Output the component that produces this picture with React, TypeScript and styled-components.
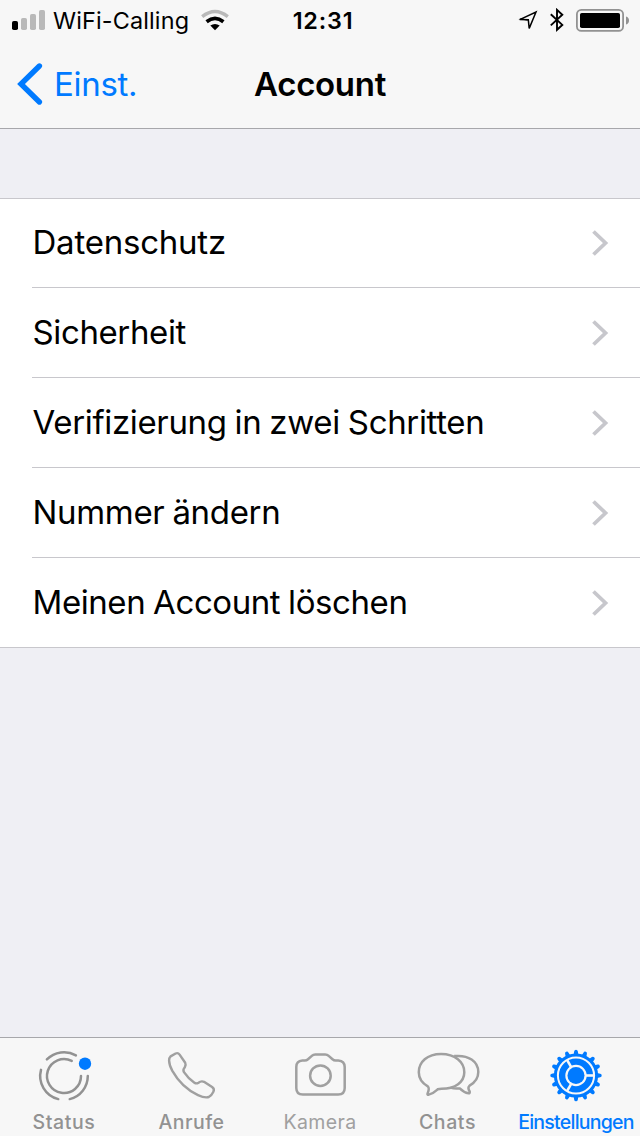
import React from "react";
import styled, { createGlobalStyle } from "styled-components";

const BLUE = "#007aff";
const GREY = "#929292";

const GlobalStyle = createGlobalStyle`
  * { box-sizing: border-box; }
  body { margin: 0; background: #efeff4; }
`;

const Screen = styled.div`
  width: 640px;
  height: 1136px;
  display: flex;
  flex-direction: column;
  background: #efeff4;
  color: #000;
  font-family: Inter, "Liberation Sans", sans-serif;
  overflow: hidden;
`;

const Header = styled.header`
  height: 129px;
  background: #f7f7f7;
  border-bottom: 1px solid #a7a7ab;
`;

const StatusBar = styled.div`
  height: 40px;
  display: grid;
  grid-template-columns: 1fr auto 1fr;
  align-items: center;
  padding: 0 11px 0 12px;
`;

const StatusGroup = styled.div<{ $end?: boolean }>`
  display: flex;
  align-items: center;
  justify-content: ${(p) => (p.$end ? "flex-end" : "flex-start")};
  height: 40px;
`;

const Label = styled.span<{ $size: number; $weight?: number; $track?: number; $color?: string }>`
  font-size: ${(p) => p.$size}px;
  font-weight: ${(p) => p.$weight ?? 400};
  letter-spacing: ${(p) => p.$track ?? 0}px;
  color: ${(p) => p.$color ?? "#000"};
  line-height: 1.2;
  white-space: nowrap;
`;

const Carrier = styled(Label)`
  padding-top: 2px;
  margin: 0 12px 0 8px;
`;

const Clock = styled(Label)`
  padding: 2px 0 0 5px;
`;

const NavBar = styled.nav`
  height: 88px;
  display: grid;
  grid-template-columns: 1fr auto 1fr;
  align-items: center;
  padding: 0 17px;
`;

const NavLabel = styled(Label)`
  padding-top: 2px;
`;

const Back = styled.div`
  display: flex;
  align-items: center;
  gap: 10px;
`;

const List = styled.ul`
  list-style: none;
  margin: 69px 0 0;
  padding: 0 0 0 32px;
  background: #fff;
  border-top: 1px solid #c8c7cc;
  border-bottom: 1px solid #c8c7cc;
`;

const Row = styled.li`
  height: 90px;
  display: flex;
  align-items: center;
  justify-content: space-between;
  padding: 1px 31px 0 0;
  border-top: 1px solid #c8c7cc;
  &:first-child { height: 88px; padding-top: 0; border-top: 0; }
`;

const RowLabel = styled(Label)`
  padding-left: 0.5px;
  word-spacing: -1px;
`;

const Spacer = styled.div`
  flex: 1;
`;

const TabBar = styled.footer`
  height: 99px;
  display: grid;
  grid-template-columns: repeat(5, 128px);
  background: #f7f7f7;
  border-top: 1px solid #a7a7ab;
`;

const Tab = styled.div<{ $pull?: number }>`
  display: flex;
  flex-direction: column;
  align-items: center;
  padding-top: 8px;
  padding-right: ${(p) => p.$pull ?? 0}px;
  gap: 5px;
`;

const rad = (deg: number) => (deg * Math.PI) / 180;
const arc = (cx: number, cy: number, r: number, from: number, to: number) => {
  const x = (d: number) => (cx + r * Math.cos(rad(d))).toFixed(2);
  const y = (d: number) => (cy + r * Math.sin(rad(d))).toFixed(2);
  return `M${x(from)} ${y(from)}A${r} ${r} 0 ${to - from > 180 ? 1 : 0} 1 ${x(to)} ${y(to)}`;
};

const SignalIcon = () => (
  <svg width="33" height="40" viewBox="0 0 33 40">
    <rect x="0" y="21" width="6" height="9" rx="1.8" fill="#000" />
    <rect x="9" y="18" width="6" height="12" rx="1.8" fill="#b9b9b9" />
    <rect x="18" y="14" width="6" height="16" rx="1.8" fill="#b9b9b9" />
    <rect x="27" y="10" width="6" height="20" rx="1.8" fill="#b9b9b9" />
  </svg>
);

const WifiIcon = () => (
  <svg width="28" height="40" viewBox="0 0 28 40" fill="none">
    <path d="M1.2 16.6Q14 6.4 26.8 16.6" stroke="#b9b9b9" strokeWidth="3.4" />
    <path d="M5.6 21.7Q14 15.2 22.4 21.7" stroke="#000" strokeWidth="3.7" />
    <path d="M9.3 25.6Q14 22.2 18.7 25.6L14 30.2Z" fill="#000" />
  </svg>
);

const LocationIcon = () => (
  <svg width="20" height="20" viewBox="0 0 20 20">
    <path d="M1.7 9.6L18 2.1L11.2 18.4L10.3 9.7Z" fill="none" stroke="#000" strokeWidth="1.5" />
    <path d="M0 9.1H8.5L10.8 10.2L9 10.5Z" fill="#000" />
  </svg>
);

const BluetoothIcon = () => (
  <svg width="14" height="24" viewBox="0 0 14 24">
    <path d="M.8 6.3L12.3 16.9L7 21.8V1.9L12.3 6.7L.8 17.4" fill="none" stroke="#000" strokeWidth="1.9" />
  </svg>
);

const BatteryIcon = () => (
  <svg width="53" height="24" viewBox="0 0 53 24">
    <rect x=".9" y="1.9" width="46.2" height="21" rx="4.4" fill="none" stroke="#929292" strokeWidth="1.8" />
    <rect x="4" y="5" width="40" height="15" rx="1.8" fill="#000" />
    <path d="M50 8.6Q53 9.5 53 12.6T50 16.6Z" fill="#929292" />
  </svg>
);

const StatusIcons = styled(StatusGroup)`
  & > svg:nth-child(1) { margin-right: 12px; }
  & > svg:nth-child(2) { margin-right: 12px; }
`;

const BackIcon = () => (
  <svg width="27" height="44" viewBox="0 0 27 44">
    <path d="M22.4 4L4 22L22.4 40" fill="none" stroke={BLUE} strokeWidth="5.4" strokeLinecap="round" strokeLinejoin="miter" />
  </svg>
);

const Chevron = () => (
  <svg width="18" height="28" viewBox="0 0 18 28">
    <path d="M2.5 2.5L14.5 14L2.5 25.5" fill="none" stroke="#c7c7cc" strokeWidth="3.8" />
  </svg>
);

const StatusTabIcon = () => (
  <svg width="60" height="60" viewBox="0 0 60 60">
    <g fill="none" stroke={GREY} strokeWidth="2.5" strokeLinecap="round">
      <path d={arc(30, 30, 17, 0, 297)} />
      <path d={arc(30, 30, 23.8, 224, 300)} />
      <path d={arc(30, 30, 23.8, 104, 195)} />
      <path d={arc(30, 30, 23.8, 0, 76)} />
    </g>
    <circle cx="51" cy="17.7" r="6.2" fill={BLUE} />
  </svg>
);

const CallsTabIcon = () => (
  <svg width="60" height="60" viewBox="0 0 60 60">
    <path
      d="M8.6 10.4L13.6 7.5Q16 6.4 17.6 8.6L23.2 16.8Q24.2 18.8 22.8 21.3Q20.5 24 22 26.2Q26 32.4 32.4 36.7Q34.3 38 36.5 36.7Q39.2 34.6 42 35.8L50.1 41.1Q52.8 43 51.4 45.8Q49.5 49.8 46.8 51Q43 52.4 36 49.1C24.5 43.7 15.8 34.6 10.2 24.6Q7.2 18.8 7.1 14.6Q7.1 11.8 8.6 10.4Z"
      fill="none"
      stroke="#a0a0a0"
      strokeWidth="2.4"
      strokeLinejoin="round"
    />
  </svg>
);

const CameraTabIcon = () => (
  <svg width="60" height="60" viewBox="0 0 60 60" fill="none" stroke="#a0a0a0" strokeWidth="2.5">
    <path d="M12.3 14.4H14.8Q16.6 14.4 18 13.2L21.8 9.9Q23.3 8.4 25.3 8.4H35.2Q37.2 8.4 38.7 9.9L42.5 13.2Q43.9 14.4 45.7 14.4H48.3Q54.7 14.8 54.7 21V42Q54.7 48.5 48.2 48.5H12.8Q6.3 48.5 6.3 42V21Q6.3 14.7 12.3 14.4Z" />
    <circle cx="30.4" cy="29.7" r="10.3" />
  </svg>
);

const ChatsTabIcon = () => (
  <svg width="66" height="60" viewBox="0 0 66 60" fill="none" stroke="#a0a0a0" strokeWidth="2.5" strokeLinejoin="round">
    <path d="M26.1 8C12.2 8 3.8 16 3.8 26.2C3.8 32.6 7.2 37.1 12.8 40.4C14.6 42 13.6 45.2 12.5 47.8Q12.2 49.1 13.8 48.6C18 47.7 20.6 45.2 22.7 43.3Q24.3 42.8 26.5 42.8C40.3 42.8 49.3 36 49.3 26.2C49.3 16 40 8 26.1 8Z" />
    <path d="M39.2 10.1C53.5 8.6 63.3 15.4 63.3 26.1C63.3 32.4 60.2 36.5 54.6 39.6C52.4 41.5 53.3 43.3 54.7 45.5Q55.1 47.4 53.4 47.2C49.3 46.7 47 44.7 44.8 42.4C41.5 42.8 38.2 42.5 35.3 41.6" />
  </svg>
);

const TEETH = Array.from({ length: 16 }, (_, i) => i * 22.5);

const SettingsTabIcon = () => (
  <svg width="60" height="60" viewBox="0 0 60 60">
    <g transform="translate(30 29.5)">
      {TEETH.map((a) => (
        <path key={a} transform={`rotate(${a})`} d="M-2.4 -21L-1.8 -24.2Q-1.6 -25.7 0 -25.7Q1.6 -25.7 1.8 -24.2L2.4 -21Z" fill={BLUE} />
      ))}
      <circle r="20.6" fill="none" stroke={BLUE} strokeWidth="3" />
      <circle r="13.9" fill="none" stroke={BLUE} strokeWidth="6.4" />
      {[0, 120, 240].map((a) => (
        <path key={a} transform={`rotate(${a})`} d="M9 0H18" stroke="#f7f7f7" strokeWidth="2.6" />
      ))}
      <circle r="8.5" fill={BLUE} />
    </g>
  </svg>
);

const ROWS = [
  { text: "Datenschutz", track: -0.22 },
  { text: "Sicherheit", track: -0.38 },
  { text: "Verifizierung in zwei Schritten", track: -0.34 },
  { text: "Nummer ändern", track: -0.32 },
  { text: "Meinen Account löschen", track: -0.42 },
];

const TABS = [
  { text: "Status", Icon: StatusTabIcon, color: GREY, weight: 500, track: 0.6 },
  { text: "Anrufe", Icon: CallsTabIcon, color: GREY, weight: 500, track: 0.5, pull: 1 },
  { text: "Kamera", Icon: CameraTabIcon, color: "#a0a0a0", weight: 400, track: 0.35 },
  { text: "Chats", Icon: ChatsTabIcon, color: GREY, weight: 500, track: 0.6, pull: 1 },
  { text: "Einstellungen", Icon: SettingsTabIcon, color: BLUE, weight: 500, track: -0.75 },
];

export default function App() {
  return (
    <Screen>
      <GlobalStyle />
      <Header>
        <StatusBar>
          <StatusGroup>
            <SignalIcon />
            <Carrier $size={23.4} $track={0.15}>WiFi-Calling</Carrier>
            <WifiIcon />
          </StatusGroup>
          <Clock $size={23.4} $weight={600} $track={0.8}>12:31</Clock>
          <StatusIcons $end>
            <LocationIcon />
            <BluetoothIcon />
            <BatteryIcon />
          </StatusIcons>
        </StatusBar>
        <NavBar>
          <Back>
            <BackIcon />
            <NavLabel $size={33} $track={-0.3} $color={BLUE}>Einst.</NavLabel>
          </Back>
          <NavLabel $size={33} $weight={600} $track={-0.3}>Account</NavLabel>
        </NavBar>
      </Header>
      <List>
        {ROWS.map((r) => (
          <Row key={r.text}>
            <RowLabel $size={33} $track={r.track}>{r.text}</RowLabel>
            <Chevron />
          </Row>
        ))}
      </List>
      <Spacer />
      <TabBar>
        {TABS.map(({ text, Icon, color, weight, track, pull }) => (
          <Tab key={text} $pull={pull}>
            <Icon />
            <Label $size={19.5} $weight={weight} $track={track} $color={color}>{text}</Label>
          </Tab>
        ))}
      </TabBar>
    </Screen>
  );
}
